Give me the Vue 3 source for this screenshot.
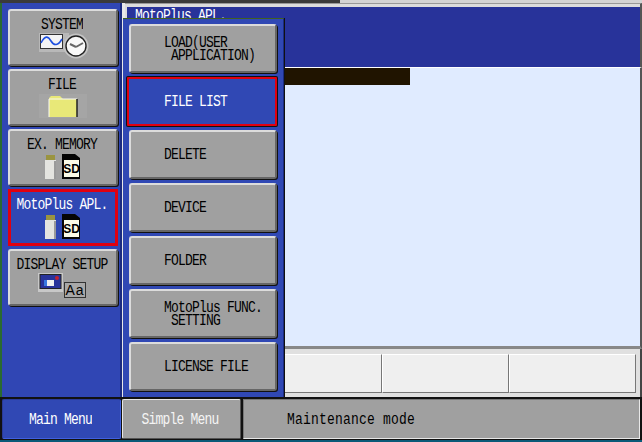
<template>
  <div class="screen">
    <div class="top-strip"></div>
    <div class="workspace">
      <aside class="side">
        <button
          v-for="item in sideItems"
          :key="item.label"
          class="side-btn"
          :class="{ active: item.active }"
        >
          <span class="txt btn-label">{{ item.label }}</span>
          <span class="btn-icon">
            <svg v-if="item.icon === 'system'" width="62" height="26" viewBox="0 0 62 26">
              <rect x="7" y="0" width="30" height="19" fill="#c8c8c8" opacity="0.6" />
              <rect x="8.5" y="1.5" width="22" height="14" fill="#f4f4f4" stroke="#333" />
              <path d="M9 10 C13 2 16 3 19 8 S26 13 30 6" fill="none" stroke="#1e50e0" stroke-width="1.6" />
              <circle cx="44" cy="13" r="12.5" fill="#c4c4c4" />
              <circle cx="44" cy="13" r="10" fill="#f8f8f8" stroke="#222" stroke-width="1.4" />
              <path d="M44 14 L38 11 M44 14 L51 10" stroke="#666" stroke-width="2" />
            </svg>
            <svg v-else-if="item.icon === 'file'" width="48" height="24" viewBox="0 0 48 24">
              <rect x="0" y="0" width="48" height="24" fill="#a5a5a5" />
              <path d="M10 23 V4 L12 2 H21 L24 5 H38 V23 Z" fill="#e8e878" />
              <path d="M10 23 V5 H38" fill="none" stroke="#f8f8f0" />
              <path d="M38 5 V23" stroke="#222" stroke-width="1.5" />
            </svg>
            <svg v-else-if="item.icon === 'media'" width="42" height="25" viewBox="0 0 42 25">
              <rect x="4" y="1" width="9" height="6" fill="#9a9440" />
              <rect x="3" y="6" width="11" height="19" fill="#e4e4e0" />
              <rect x="12" y="7" width="2" height="18" fill="#9a9a9a" />
              <path d="M20 0 H33 L38 4 V25 H20 Z" fill="#050505" />
              <rect x="22" y="6" width="15" height="17" fill="#fbfbe8" />
              <text x="29.5" y="19" text-anchor="middle" class="sd-text">SD</text>
            </svg>
            <svg v-else width="50" height="26" viewBox="0 0 50 26">
              <rect x="0" y="0" width="25" height="19" fill="#c8c8c8" />
              <rect x="2" y="1.5" width="21" height="14" fill="#28339a" stroke="#222" />
              <rect x="6" y="7" width="10" height="6" fill="#f0f0f0" />
              <rect x="6" y="7" width="3" height="6" fill="#3878e0" />
              <circle cx="19" cy="5" r="2" fill="#c02030" />
              <rect x="26.5" y="9.5" width="21" height="15" fill="#a8a8a8" stroke="#333" />
              <text x="37" y="22" text-anchor="middle" class="aa-text">Aa</text>
            </svg>
          </span>
        </button>
      </aside>

      <main class="main">
        <div class="title-frame">
          <div class="title-bar"><span class="txt">MotoPlus APL.</span></div>
        </div>
        <div class="content">
          <div class="cursor-row"></div>
        </div>
        <div class="cells">
          <div v-for="n in 4" :key="n" class="cell"></div>
        </div>
      </main>

      <nav class="popup">
        <button
          v-for="item in menuItems"
          :key="item.label"
          class="menu-btn"
          :class="{ active: item.active }"
        ><span class="txt">{{ item.label }}</span></button>
      </nav>
    </div>

    <footer class="footer">
      <div class="foot-tab main-tab"><span class="txt">Main Menu</span></div>
      <div class="foot-tab simple-tab"><span class="txt">Simple Menu</span></div>
      <div class="foot-status"><span class="txt">Maintenance mode</span></div>
    </footer>
  </div>
</template>

<script setup>
const sideItems = [
  { label: 'SYSTEM', icon: 'system' },
  { label: 'FILE', icon: 'file' },
  { label: 'EX. MEMORY', icon: 'media' },
  { label: 'MotoPlus APL.', icon: 'media', active: true },
  { label: 'DISPLAY SETUP', icon: 'display' },
]

const menuItems = [
  { label: 'LOAD(USER\n APPLICATION)' },
  { label: 'FILE LIST', active: true },
  { label: 'DELETE' },
  { label: 'DEVICE' },
  { label: 'FOLDER' },
  { label: 'MotoPlus FUNC.\n SETTING' },
  { label: 'LICENSE FILE' },
]
</script>

<style>
html,
body {
  margin: 0;
  background: #0a5a78;
}
</style>

<style scoped>
.screen {
  width: 642px;
  height: 442px;
  overflow: hidden;
  background: #000;
  font-family: "Liberation Mono", monospace;
  font-size: 13px;
  letter-spacing: -0.8px;
  display: flex;
  flex-direction: column;
  box-sizing: border-box;
  border-bottom: 2px solid #0a5a78;
}

button {
  font: inherit;
  letter-spacing: inherit;
  margin: 0;
}

/* the panel font is a tall narrow bitmap, stretch to get near it */
.txt {
  display: inline-block;
  transform: scaleY(1.2);
}

.top-strip {
  height: 3px;
  flex: none;
  background: linear-gradient(to right, #3a3a3a 340px, #d4d4d4 340px);
}

.workspace {
  position: relative;
  height: 394px;
  flex: none;
  display: flex;
  background: #e8e8e8;
}

.side {
  width: 122px;
  flex: none;
  box-sizing: border-box;
  padding: 6px 4px 0 6px;
  margin-right: 3px;
  border-left: 2px solid #2a6a30;
  background: #3046b4;
  display: flex;
  flex-direction: column;
  gap: 3px;
  box-shadow: inset -2px 0 0 #1a2a80;
}

.side-btn {
  height: 57px;
  width: 110px;
  flex: none;
  box-sizing: border-box;
  padding: 8px 0 0;
  background: #a0a0a0;
  color: #000;
  border: 2px solid;
  border-color: #dcdcdc #666 #666 #dcdcdc;
  border-radius: 3px;
  box-shadow: 1px 1px 0 #111;
  display: flex;
  flex-direction: column;
  align-items: center;
  gap: 2px;
}

.side-btn.active {
  padding-top: 7px;
  background: #3048b4;
  color: #fff;
  border: 3px solid #e00010;
  border-radius: 0;
  box-shadow: none;
}

.btn-label {
  line-height: 12px;
  margin-left: -2px;
}

.btn-icon {
  height: 26px;
  display: flex;
  align-items: center;
}

.sd-text {
  font-family: "Liberation Sans", sans-serif;
  font-size: 12px;
  font-weight: 700;
  letter-spacing: 0;
  fill: #000;
}

.aa-text {
  font-family: "Liberation Sans", sans-serif;
  font-size: 14px;
  letter-spacing: 1px;
  fill: #000;
}

.main {
  flex: 1;
  min-width: 0;
  display: flex;
  flex-direction: column;
}

.title-frame {
  padding-top: 3px;
  background: #dcdcdc;
  border-top: 1px solid #999;
  border-right: 2px solid #555;
}

.title-bar {
  height: 60px;
  box-sizing: border-box;
  padding: 2px 0 0 8px;
  background: #28339a;
  color: #fff;
  border-left: 2px solid #dcdcdc;
  line-height: 14px;
}

.content {
  flex: 1;
  background: #e0ebff;
  border-left: 2px solid #dcdcdc;
  border-right: 2px solid #555;
  border-bottom: 3px solid #888;
  border-top: 1px solid #fff;
}

.cursor-row {
  width: 283px;
  height: 17px;
  background: #201400;
}

.cells {
  height: 48px;
  flex: none;
  box-sizing: border-box;
  padding: 5px 4px 4px 2px;
  background: #e0e0e0;
  border-right: 2px solid #444;
  display: grid;
  grid-template-columns: repeat(4, 1fr);
}

.cell {
  background: #efefef;
  border: 1px solid;
  border-color: #fff #777 #777 #fff;
}

.popup {
  position: absolute;
  left: 123px;
  top: 15px;
  width: 161px;
  height: 379px;
  box-sizing: border-box;
  padding: 5px 6px 0 6px;
  background: #3048b4;
  border-top: 1px solid #406020;
  border-right: 1px solid #1a2a80;
  box-shadow: 1px 0 0 #111;
  display: flex;
  flex-direction: column;
  gap: 4px;
}

.menu-btn {
  height: 49px;
  flex: none;
  box-sizing: border-box;
  padding: 0 0 0 33px;
  text-align: left;
  white-space: pre;
  line-height: 11px;
  background: #a0a0a0;
  color: #000;
  border: 2px solid;
  border-color: #dcdcdc #666 #666 #dcdcdc;
  border-radius: 3px;
  box-shadow: 1px 1px 0 #111;
}

.menu-btn.active {
  margin-left: -2px;
  padding-left: 35px;
  background: #3048b4;
  color: #fff;
  border-color: #e00010;
  border-radius: 1px;
  box-shadow: 0 0 0 1px #111;
}

.footer {
  height: 43px;
  flex: none;
  box-sizing: border-box;
  padding: 2px 2px 1px 2px;
  display: flex;
  gap: 1px;
  background: #111;
}

.foot-tab {
  width: 119px;
  flex: none;
  box-sizing: border-box;
  display: flex;
  align-items: center;
  justify-content: center;
  border: 1px solid;
  border-radius: 2px;
}

.main-tab {
  background: #3048b4;
  color: #fff;
  border-color: #2a3a9a #4060e0 #4060e0 #2a3a9a;
  padding-right: 2px;
}

.simple-tab {
  background: #a0a0a0;
  color: #f4f4f4;
  border-color: #e8e8e8 #555 #555 #e8e8e8;
  padding-right: 3px;
}

.foot-status {
  flex: 1;
  margin-left: 1px;
  padding-left: 43px;
  display: flex;
  align-items: center;
  background: #a0a0a0;
  color: #000;
  letter-spacing: 0.2px;
  border: 1px solid;
  border-color: #777 #e8e8e8 #e8e8e8 #777;
}
</style>
